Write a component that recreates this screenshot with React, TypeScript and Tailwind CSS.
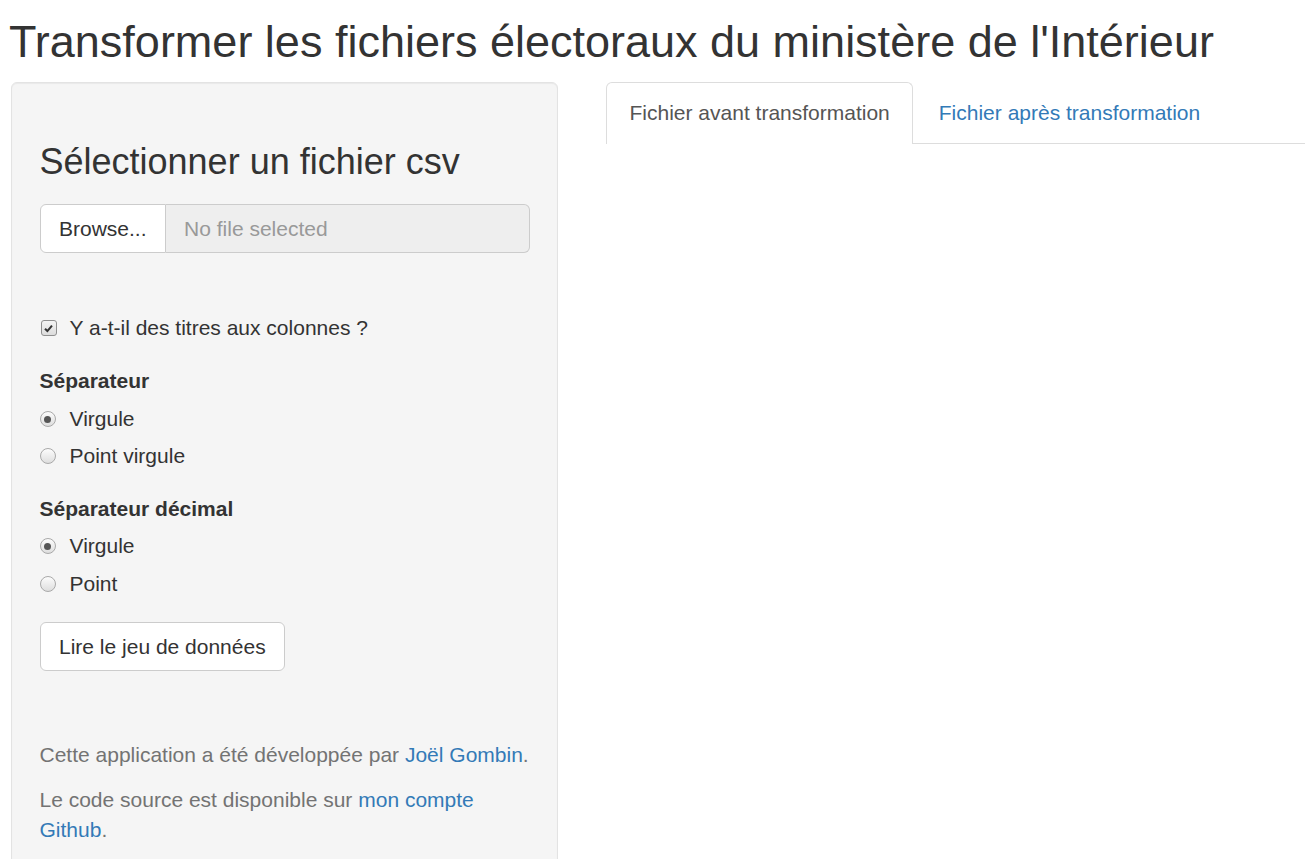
import React from "react";

function CheckBox() {
  return (
    <span className="flex h-[16px] w-[16px] shrink-0 items-center justify-center rounded-[3px] border border-[#8f8f8f] bg-gradient-to-b from-[#f4f4f4] to-[#dcdcdc]">
      <svg viewBox="0 0 12 12" className="h-[11px] w-[11px]">
        <path d="M2.2 6.2 L4.8 8.8 L9.8 2.8" fill="none" stroke="#333" strokeWidth="2.2" />
      </svg>
    </span>
  );
}

function Radio({ checked }: { checked?: boolean }) {
  return (
    <span className="flex h-[16px] w-[16px] shrink-0 items-center justify-center rounded-full border border-[#a9a9a9] bg-gradient-to-b from-[#fcfcfc] to-[#dedede]">
      {checked && <span className="h-[7px] w-[7px] rounded-full bg-[#555]" />}
    </span>
  );
}

function RadioRow({ label, checked, className }: { label: string; checked?: boolean; className?: string }) {
  return (
    <div className={"flex h-[30px] items-center " + (className ?? "")}>
      <Radio checked={checked} />
      <span className="ml-[14px]">{label}</span>
    </div>
  );
}

export default function App() {
  return (
    <div className="min-h-screen bg-white pt-[17px] font-['Liberation_Sans',Arial,sans-serif] text-[21px] leading-[30px] text-[#333]">
      <h2 className="ml-[9px] text-[45px] leading-[49.5px] font-normal">
        Transformer les fichiers électoraux du ministère de l'Intérieur
      </h2>

      <div className="mt-[15px] flex items-start">
        {/* sidebar */}
        <div className="ml-[11px] w-[547px] shrink-0 rounded-[6px] border-[1.5px] border-[#e3e3e3] bg-[#f5f5f5] px-[27.5px] pt-[29px] pb-[28px] shadow-[inset_0_1px_1px_rgba(0,0,0,0.05)]">
          <h3 className="mt-[30px] text-[36px] leading-[39.6px] font-normal">Sélectionner un fichier csv</h3>

          <div className="mt-[23px] flex h-[49px] w-[490px]">
            <div className="flex items-center rounded-l-[6px] border-[1.5px] border-[#ccc] bg-white px-[18.5px]">
              Browse...
            </div>
            <div className="flex flex-1 items-center rounded-r-[6px] border-[1.5px] border-l-0 border-[#ccc] bg-[#eeeeee] px-[18px] text-[#999]">
              No file selected
            </div>
          </div>

          <div className="mt-[60px] flex h-[30px] items-center">
            <span className="ml-[1px]">
              <CheckBox />
            </span>
            <span className="ml-[13px]">Y a-t-il des titres aux colonnes ?</span>
          </div>

          <div className="mt-[23px] font-bold">Séparateur</div>
          <RadioRow className="mt-[8px]" label="Virgule" checked />
          <RadioRow className="mt-[7px]" label="Point virgule" />

          <div className="mt-[23px] font-bold">Séparateur décimal</div>
          <RadioRow className="mt-[7px]" label="Virgule" checked />
          <RadioRow className="mt-[8px]" label="Point" />

          <button
            type="button"
            className="mt-[23px] flex h-[49px] items-center rounded-[6px] border-[1.5px] border-[#ccc] bg-white px-[18.5px] text-[#333]"
          >
            Lire le jeu de données
          </button>

          <p className="mt-[69px] text-[#737373]">
            Cette application a été développée par <span className="text-[#337ab7]">Joël Gombin</span>.
          </p>
          <p className="mt-[15px] text-[#737373]">
            Le code source est disponible sur <span className="text-[#337ab7]">mon compte Github</span>.
          </p>
        </div>

        {/* main panel */}
        <div className="ml-[48px] flex-1">
          <div className="flex border-b-[1.5px] border-[#ddd]">
            <div className="-mb-[1.5px] rounded-t-[6px] border-[1.5px] border-b-0 border-[#ddd] bg-white px-[22.5px] pt-[15px] pb-[16px] text-[#555]">
              Fichier avant transformation
            </div>
            <div className="ml-[3px] px-[22.5px] pt-[16px] pb-[15px] text-[#337ab7]">Fichier après transformation</div>
          </div>
        </div>
      </div>
    </div>
  );
}
